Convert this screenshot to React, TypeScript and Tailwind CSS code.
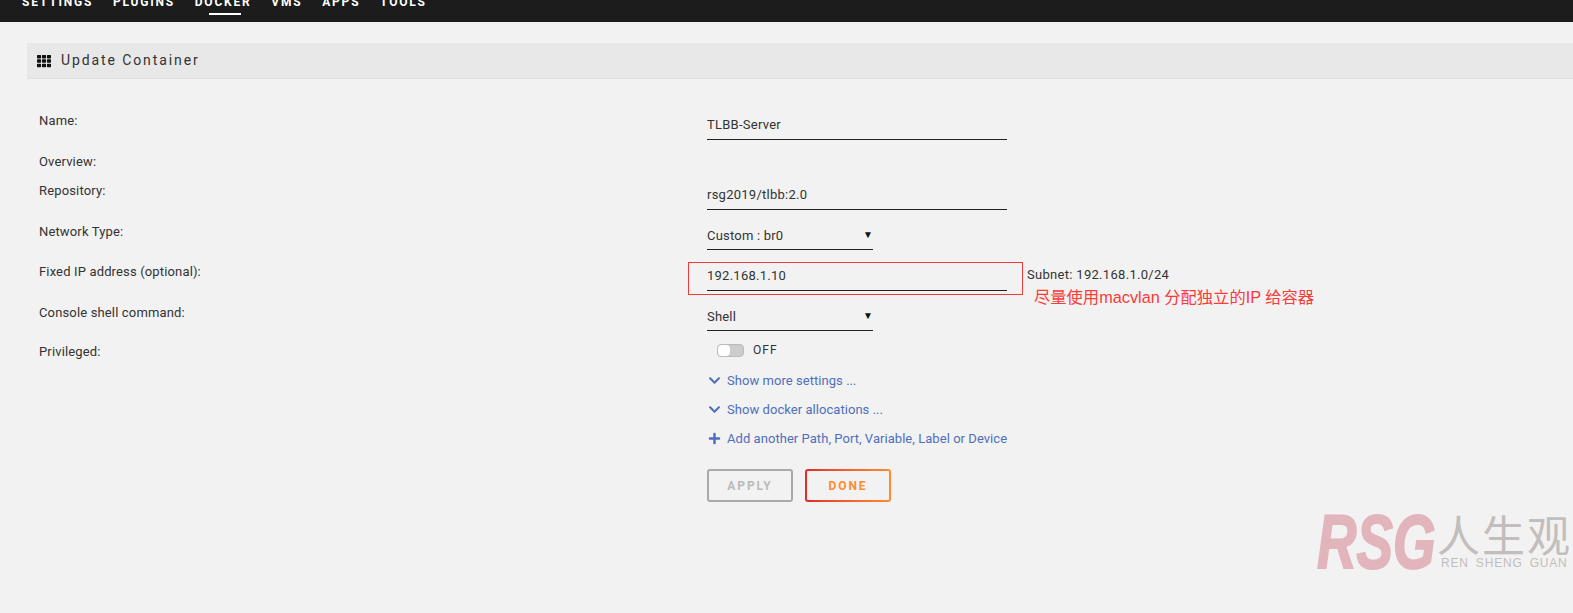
import { FaChevronDown, FaPlus, FaTh } from 'react-icons/fa'

const navItems = ['SETTINGS', 'PLUGINS', 'DOCKER', 'VMS', 'APPS', 'TOOLS']

function TextValue({ value, width }: { value: string; width: string }) {
  return (
    <div className={`${width} h-[29px] border-b border-[#222] pt-[5px] text-[13px] leading-[18px] tracking-[0.25px] text-[#333]`}>
      {value}
    </div>
  )
}

function SelectValue({ value }: { value: string }) {
  return (
    <div className="flex h-[28px] w-[166px] items-start justify-between border-b border-[#222] pt-[5px] text-[13px] leading-[18px] tracking-[0.2px] text-[#333]">
      <span>{value}</span>
      <span className="text-[10px] leading-[16px] text-[#111]">▼</span>
    </div>
  )
}

function Row({ label, height, children }: { label: string; height: string; children?: React.ReactNode }) {
  return (
    <div className={`flex ${height}`}>
      <div className="w-[668px] shrink-0 pt-[1px] text-[13px] leading-[18px] tracking-[0.15px] text-[#333]">{label}</div>
      <div className="flex-1">{children}</div>
    </div>
  )
}

function LinkRow({ icon, text }: { icon: React.ReactNode; text: string }) {
  return (
    <div className="flex h-[29px] items-center gap-[5px] text-[13px] tracking-[0.05px] text-[#4f6fbc]">
      <span className="flex w-[15px] justify-center text-[13px]">{icon}</span>
      <span>{text}</span>
    </div>
  )
}

export default function App() {
  return (
    <div className="relative h-[613px] w-[1573px] overflow-hidden bg-[#f2f2f2] font-['Roboto','Noto_Sans',sans-serif]">
      {/* Top nav, cut off by the screenshot */}
      <div className="flex h-[22px] gap-[19.75px] overflow-hidden bg-[#1c1c1c] pl-[22px]">
        {navItems.map((item) => (
          <div key={item} className="relative h-[22px]">
            <span className="-mt-[7px] block text-[12px] font-bold leading-[18px] tracking-[1.8px] text-white">
              {item}
            </span>
            {item === 'DOCKER' && <div className="absolute bottom-[7px] left-[14px] h-[2px] w-[32px] bg-white" />}
          </div>
        ))}
      </div>

      {/* Section header */}
      <div className="ml-[27px] mt-[21px] flex h-[36px] items-center gap-[10px] border-b border-[#e0e0e0] bg-[#e8e8e8] pl-[10px]">
        <FaTh className="h-[14px] w-[14px] text-[#111]" />
        <span className="text-[14px] tracking-[1.9px] text-[#333]">Update Container</span>
      </div>

      {/* Form */}
      <div className="ml-[39px] mt-[32px]">
        <Row label="Name:" height="h-[41px]">
          <TextValue value="TLBB-Server" width="w-[300px]" />
        </Row>
        <Row label="Overview:" height="h-[29px]" />
        <Row label="Repository:" height="h-[41px]">
          <TextValue value="rsg2019/tlbb:2.0" width="w-[300px]" />
        </Row>
        <Row label="Network Type:" height="h-[40px]">
          <SelectValue value="Custom : br0" />
        </Row>
        <Row label="Fixed IP address (optional):" height="h-[41px]">
          <div className="flex items-start">
            <TextValue value="192.168.1.10" width="w-[300px]" />
            <span className="ml-[20px] mt-[4px] text-[13px] leading-[18px] tracking-[0.3px] text-[#333]">Subnet: 192.168.1.0/24</span>
          </div>
        </Row>
        <Row label="Console shell command:" height="h-[39px]">
          <SelectValue value="Shell" />
        </Row>
        <Row label="Privileged:" height="h-[24px]">
          <div className="-mt-[1px] ml-[10px] flex items-center gap-[9px]">
            <div className="h-[13px] w-[27px] rounded-[4px] border border-[#bbb] bg-[#ccc]">
              <div className="h-full w-[12px] rounded-[4px] bg-white" />
            </div>
            <span className="text-[12px] leading-[18px] tracking-[1px] text-[#333]">OFF</span>
          </div>
        </Row>
        <div className="ml-[668px]">
          <LinkRow icon={<FaChevronDown />} text="Show more settings ..." />
          <LinkRow icon={<FaChevronDown />} text="Show docker allocations ..." />
          <LinkRow icon={<FaPlus />} text="Add another Path, Port, Variable, Label or Device" />
          <div className="mt-[16px] flex gap-[12px]">
            <div className="flex h-[33px] w-[86px] items-center justify-center rounded-[3px] border-2 border-[#aaa] text-[12px] font-bold tracking-[1.9px] text-[#bbb]">
              APPLY
            </div>
            <div className="rounded-[3px] bg-gradient-to-r from-[#e22828] to-[#ff8c2f] p-[2px]">
              <div className="flex h-[29px] w-[82px] items-center justify-center rounded-[1px] bg-[#f2f2f2] text-[12px] font-bold tracking-[1.9px] text-[#ff8c2f]">
                DONE
              </div>
            </div>
          </div>
        </div>
      </div>

      {/* Red annotation drawn over the screenshot */}
      <div className="absolute left-[688px] top-[262px] h-[33px] w-[335px] border border-[#f03a3a]" />
      <div className="absolute left-[1034px] top-[287px] whitespace-nowrap font-['Liberation_Sans','Noto_Sans_CJK_SC',sans-serif] text-[16.3px] leading-[20px] text-[#fb3a3a]">
        尽量使用macvlan 分配独立的IP 给容器
      </div>

      {/* Watermark */}
      <div className="absolute left-[1317px] top-[504px] origin-left scale-x-[0.72] font-['Liberation_Sans',sans-serif] text-[76px] font-bold italic leading-[76px] text-[#e2b5bc] [-webkit-text-stroke:2px_#e2b5bc]">
        RSG
      </div>
      <div className="absolute left-[1437px] top-[511px] font-['Noto_Sans_CJK_SC',sans-serif] text-[43px] leading-[44px] tracking-[2px] text-[#c2bebd]">
        人生观
      </div>
      <div className="absolute left-[1441px] top-[556px] whitespace-nowrap font-['Liberation_Sans',sans-serif] text-[12px] leading-[14px] tracking-[0.8px] text-[#c2bebd] [word-spacing:3px]">
        REN SHENG GUAN
      </div>
    </div>
  )
}
